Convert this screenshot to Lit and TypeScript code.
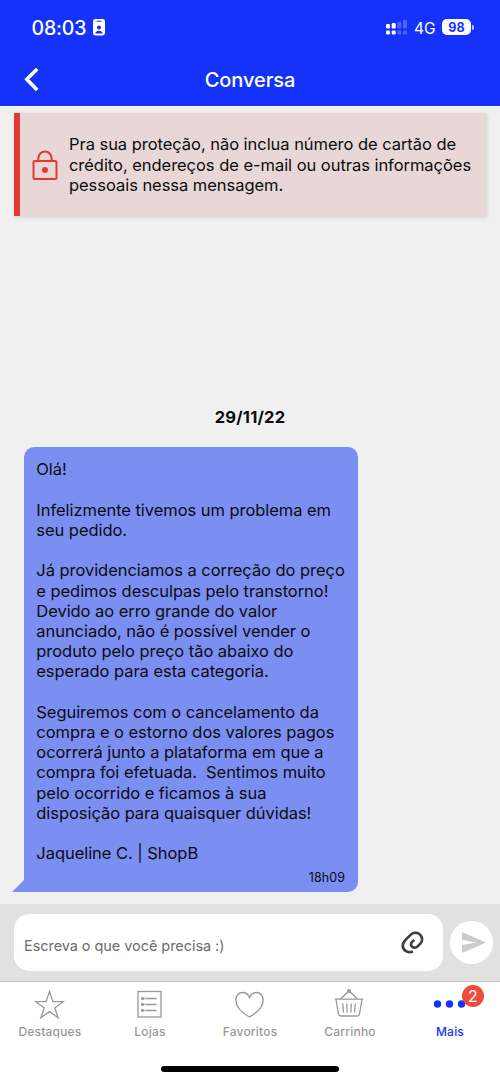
import { LitElement, html, css, svg } from "lit";
import { customElement, property } from "lit/decorators.js";
import { classMap } from "lit/directives/class-map.js";

@customElement("status-header")
export class StatusHeader extends LitElement {
  @property({ type: String }) time = "";
  @property({ type: String }) heading = "";
  @property({ type: String }) battery = "";

  static styles = css`
    :host {
      display: block;
      height: 106px;
      background: #1432fa;
      color: #fff;
      border-bottom: 1px solid #fafafa;
    }
    svg {
      display: block;
    }
    .status {
      display: flex;
      align-items: center;
      height: 54px;
      padding: 0 26px 0 31.5px;
    }
    .time {
      padding-top: 1px;
      font-size: 19.5px;
      font-weight: 550;
      letter-spacing: -0.15px;
      width: 61.5px;
      white-space: nowrap;
    }
    .signal {
      margin-left: auto;
    }
    .network {
      font-size: 15.5px;
      width: 22px;
      margin: 2px 6px 0 7px;
    }
    .battery {
      width: 29px;
      height: 16px;
      border-radius: 5px;
      background: #fff;
      color: #1432fa;
      font-size: 12.5px;
      font-weight: 700;
      line-height: 17px;
      text-align: center;
    }
    .cap {
      width: 2px;
      height: 5px;
      margin-left: 1px;
      border-radius: 0 2px 2px 0;
      background: #c0c9fd;
    }
    .nav {
      display: grid;
      grid-template-columns: 60px 1fr 60px;
      align-items: center;
      height: 52px;
    }
    .back {
      margin-left: 24px;
    }
    .heading {
      font-size: 20px;
      font-weight: 500;
      letter-spacing: -0.1px;
      text-align: center;
    }
  `;

  render() {
    return html`
      <div class="status">
        <div class="time">${this.time}</div>
        <svg width="12" height="17" viewBox="0 0 12 17">
          <rect width="12" height="16.5" rx="2.4" fill="#fff" />
          <path d="M4 2.3h4" stroke="#1432fa" stroke-width="1.1" stroke-linecap="round" />
          <circle cx="6" cy="8.6" r="2" fill="#1432fa" />
          <path d="M2.3 14.5c.3-2 1.8-2.8 3.7-2.8s3.4.8 3.7 2.8z" fill="#1432fa" />
        </svg>
        <svg class="signal" width="21" height="16" viewBox="0 0 21 16">
          <g fill="#fff">
            <rect y="5" width="4" height="4.5" rx="1.2" />
            <rect y="11.5" width="4" height="4" rx="1.2" />
            <rect x="5.7" y="4" width="4" height="5.5" rx="1.2" />
            <rect x="5.7" y="11.5" width="4" height="4" rx="1.2" />
          </g>
          <g fill="#4a63fb">
            <rect x="11.3" y="2.5" width="4" height="7" rx="1.2" />
            <rect x="11.3" y="11.5" width="4" height="4" rx="1.2" />
            <rect x="17" y=".8" width="4" height="8.7" rx="1.2" />
            <rect x="17" y="11.5" width="4" height="4" rx="1.2" />
          </g>
        </svg>
        <div class="network">4G</div>
        <div class="battery">${this.battery}</div>
        <div class="cap"></div>
      </div>
      <div class="nav">
        <svg class="back" width="16" height="26" viewBox="0 0 16 26">
          <path d="M13.2 2 2.8 12.3l10.4 10.6" fill="none" stroke="#fff" stroke-width="3.6" />
        </svg>
        <div class="heading">${this.heading}</div>
      </div>
    `;
  }
}

@customElement("safety-notice")
export class SafetyNotice extends LitElement {
  @property({ attribute: false }) lines: string[] = [];

  static styles = css`
    :host {
      display: flex;
      align-items: center;
      box-sizing: border-box;
      height: 103px;
      margin: 6px 13.6px 0 14.4px;
      padding-left: 11.2px;
      border-left: 6px solid #e03a32;
      background: #e9d7d7;
      box-shadow: 1px 1px 4px rgba(0, 0, 0, 0.14);
    }
    svg {
      flex: none;
      margin-top: 2px;
    }
    .text {
      margin-left: 11.4px;
      padding-top: 0.5px;
      font-size: 16.5px;
      line-height: 20.2px;
      letter-spacing: -0.04px;
      white-space: nowrap;
    }
  `;

  render() {
    return html`
      <svg width="26" height="31" viewBox="0 0 26 31">
        <g fill="none" stroke="#e53930" stroke-width="2">
          <rect x="1.5" y="11" width="23" height="18" rx="1.5" />
          <path d="M6.3 11V8.5a6.7 7 0 0 1 13.4 0V11" />
        </g>
        <circle cx="13" cy="20" r="3" fill="#e53930" />
      </svg>
      <div class="text">${this.lines.map((line) => html`<div>${line}</div>`)}</div>
    `;
  }
}

@customElement("chat-bubble")
export class ChatBubble extends LitElement {
  @property({ type: String }) text = "";
  @property({ type: String }) time = "";

  static styles = css`
    :host {
      display: block;
      position: relative;
      box-sizing: border-box;
      width: 333.5px;
      height: 445px;
      padding: 12.4px 12.3px 0;
      border-radius: 10px 10px 10px 0;
      background: #7b8ff2;
    }
    .text {
      font-size: 16.5px;
      line-height: 20.2px;
      letter-spacing: -0.05px;
      white-space: pre;
    }
    .time {
      margin-top: 6px;
      font-size: 12.5px;
      line-height: 18px;
      letter-spacing: 0.1px;
      text-align: right;
    }
    .tail {
      position: absolute;
      left: -12px;
      bottom: 0;
      width: 13px;
      height: 13px;
      background: #7b8ff2;
      clip-path: polygon(100% 0, 100% 100%, 0 100%);
    }
  `;

  render() {
    return html`
      <div class="text">${this.text}</div>
      <div class="time">${this.time}</div>
      <div class="tail"></div>
    `;
  }
}

@customElement("message-composer")
export class MessageComposer extends LitElement {
  @property({ type: String }) placeholder = "";

  static styles = css`
    :host {
      display: flex;
      align-items: center;
      box-sizing: border-box;
      height: 77px;
      padding: 0 7px 0 14px;
      background: #e1e1e1;
    }
    svg {
      display: block;
    }
    .field {
      display: flex;
      align-items: center;
      justify-content: space-between;
      box-sizing: border-box;
      width: 429px;
      height: 57px;
      padding: 0 19px 0 10px;
      border-radius: 15px;
      background: #fff;
    }
    .placeholder {
      padding-top: 5px;
      font-size: 14.5px;
      letter-spacing: -0.06px;
      color: #6b6b6b;
      white-space: nowrap;
    }
    .send {
      display: flex;
      align-items: center;
      justify-content: center;
      box-sizing: border-box;
      width: 42.5px;
      height: 42.5px;
      margin-left: 7px;
      padding-left: 5px;
      border-radius: 50%;
      background: #fff;
    }
  `;

  render() {
    return html`
      <div class="field">
        <div class="placeholder">${this.placeholder}</div>
        <svg width="23" height="23" viewBox="0 0 69 69">
          <path
            d="M36 61C24 67 6 61 5 44C5 36 10 31 15 25L27 13C34 5 46 3 55 9C65 17 66 30 58 38L50 46C43 53 31 50 30 41C29 35 34 31 40 27"
            fill="none"
            stroke="#404040"
            stroke-width="8"
          />
        </svg>
      </div>
      <div class="send">
        <svg width="24" height="21" viewBox="0 0 24 21">
          <path d="M0 0 24 10.5 0 21V13l15-2.5L0 8z" fill="#cbcbcb" />
        </svg>
      </div>
    `;
  }
}

interface Tab {
  label: string;
  icon: unknown;
  badge?: string;
}

@customElement("tab-bar")
export class TabBar extends LitElement {
  @property({ type: String }) active = "";

  static styles = css`
    :host {
      display: flex;
      flex-direction: column;
      box-sizing: border-box;
      height: 101px;
      border-top: 1px solid #c6c6c6;
      background: #fff;
    }
    .tabs {
      display: grid;
      grid-template-columns: repeat(5, 1fr);
      height: 84px;
    }
    .tab {
      display: flex;
      flex-direction: column;
      align-items: center;
      position: relative;
      padding-top: 7px;
      color: #999;
    }
    .tab.active {
      color: #1432fa;
    }
    svg {
      display: block;
      margin-right: 2px;
    }
    .label {
      margin-top: 2px;
      font-size: 12px;
      line-height: 18px;
      font-weight: 500;
      letter-spacing: 0.2px;
    }
    .badge {
      position: absolute;
      left: 62px;
      top: 3px;
      width: 22px;
      height: 22px;
      border-radius: 50%;
      background: #ed4b3e;
      color: #fff;
      font-size: 16px;
      line-height: 22px;
      text-align: center;
    }
    .indicator {
      width: 178px;
      height: 6px;
      margin: 0 auto;
      border-radius: 3px;
      background: #000;
    }
  `;

  private tabs: Tab[] = [
    {
      label: "Destaques",
      icon: svg`<path d="M17.5 2.5l3.4 10.2h10.3l-8.4 6.2 3.3 9.8-8.6-6.1-8.6 6.1 3.3-9.8-8.4-6.2h10.3z" />`,
    },
    {
      label: "Lojas",
      icon: svg`
        <rect x="6" y="2.5" width="23" height="25.5" />
        <path d="M13.5 9.5h11M13.5 15.5h11M13.5 21.5h11" />
        <path d="M9 9.5h3.5M9 15.5h3.5M9 21.5h3.5" stroke-width="2.6" />`,
    },
    {
      label: "Favoritos",
      icon: svg`<path d="M17.5 8.5C16 5 13.5 3.5 10.7 3.5C6.5 3.5 3.8 7 3.8 11C3.8 17.5 10.5 24 17.5 28C24.5 24 31.2 17.5 31.2 11C31.2 7 28.5 3.5 24.3 3.5C21.5 3.5 19 5 17.5 8.5z" />`,
    },
    {
      label: "Carrinho",
      icon: svg`
        <path d="M2.8 10.2h28.4M4 10.5l2.5 14.5q.3 2 2.3 2h16.4q2 0 2.3-2L30 10.5" />
        <path d="M8.5 10 17 2l8.5 8M10.7 14.5l.8 9M14.8 14.5l.3 9M19.2 14.5l-.3 9M23.3 14.5l-.8 9" />
        <circle cx="17" cy="2" r="1.3" fill="currentColor" />`,
    },
    {
      label: "Mais",
      badge: "2",
      icon: svg`<g fill="currentColor" stroke="none">
        <circle cx="5.5" cy="15" r="3.7" />
        <circle cx="17.5" cy="15" r="3.7" />
        <circle cx="29.5" cy="15" r="3.7" />
      </g>`,
    },
  ];

  render() {
    return html`
      <div class="tabs">
        ${this.tabs.map(
          (tab) => html`
            <div class=${classMap({ tab: true, active: tab.label === this.active })}>
              <svg width="34" height="32" viewBox="0 0 34 32" fill="none" stroke="currentColor" stroke-width="1.3">
                ${tab.icon}
              </svg>
              <div class="label">${tab.label}</div>
              ${tab.badge ? html`<div class="badge">${tab.badge}</div>` : ""}
            </div>
          `
        )}
      </div>
      <div class="indicator"></div>
    `;
  }
}

const NOTICE = [
  "Pra sua proteção, não inclua número de cartão de",
  "crédito, endereços de e-mail ou outras informações",
  "pessoais nessa mensagem.",
];

const MESSAGE = `Olá!

Infelizmente tivemos um problema em
seu pedido.

Já providenciamos a correção do preço
e pedimos desculpas pelo transtorno!
Devido ao erro grande do valor
anunciado, não é possível vender o
produto pelo preço tão abaixo do
esperado para esta categoria.

Seguiremos com o cancelamento da
compra e o estorno dos valores pagos
ocorrerá junto a plataforma em que a
compra foi efetuada.  Sentimos muito
pelo ocorrido e ficamos à sua
disposição para quaisquer dúvidas!

Jaqueline C. | ShopB`;

@customElement("app-root")
export class AppRoot extends LitElement {
  static styles = css`
    :host {
      display: flex;
      flex-direction: column;
      width: 500px;
      height: 1082px;
      overflow: hidden;
      background: #f0f0f0;
      color: #0c0c0e;
      font-family: Inter, "Liberation Sans", sans-serif;
    }
    .conversation {
      display: flex;
      flex: 1;
      flex-direction: column;
      justify-content: flex-end;
      padding: 0 24px 12px;
    }
    .date {
      margin-bottom: 20px;
      font-size: 16.5px;
      font-weight: 700;
      letter-spacing: 0.2px;
      line-height: 20px;
      text-align: center;
    }
  `;

  render() {
    return html`
      <status-header time="08:03" heading="Conversa" battery="98"></status-header>
      <safety-notice .lines=${NOTICE}></safety-notice>
      <div class="conversation">
        <div class="date">29/11/22</div>
        <chat-bubble .text=${MESSAGE} time="18h09"></chat-bubble>
      </div>
      <message-composer placeholder="Escreva o que você precisa :)"></message-composer>
      <tab-bar active="Mais"></tab-bar>
    `;
  }
}
